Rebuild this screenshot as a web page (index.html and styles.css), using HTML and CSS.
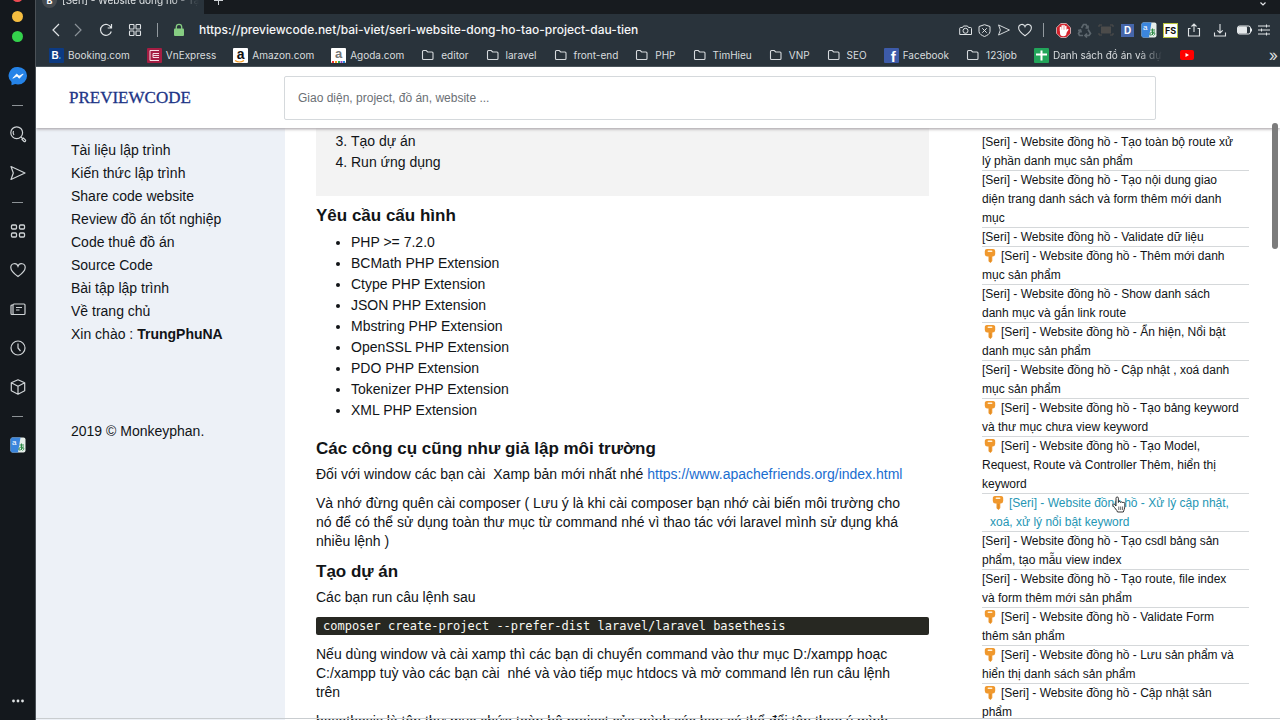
FILE: index.html
```html
<!DOCTYPE html>
<html lang="vi">
<head>
<meta charset="utf-8">
<title>[Seri] - Website đồng hồ - Tạo project đầu tiên</title>
<link rel="stylesheet" href="styles.css">
</head>
<body>
<svg class="defs" aria-hidden="true">
  <symbol id="folder" viewBox="0 0 14 12"><path d="M1.500 9.500v-7a1 1 0 0 1 1-1h2.700l1.500 1.500h4.300a1 1 0 0 1 1 1v5.500a1 1 0 0 1-1 1h-8.500a1 1 0 0 1-1-1z" fill="none" stroke="#d5d9dc" stroke-width="1.100"/></symbol>
  <symbol id="key" viewBox="0 0 12 14"><path d="M3 0h6a2.300 2.300 0 0 1 2.200 2.500v2.500A2.700 2.700 0 0 1 8.300 7.500V12L6.500 14 4.500 12.300V7.500H3.700A2.700 2.700 0 0 1 .8 5V2.500A2.300 2.300 0 0 1 3 0z" fill="#f0982d"/><path d="M4.300 2.300h3.400" stroke="#fff3dc" stroke-width="1.500" stroke-linecap="round"/><path d="M6.200 8v5" stroke="#d08222" stroke-width=".7"/></symbol>
  <symbol id="heart" viewBox="0 0 18 18"><path d="M9 15.500C4 12 1.800 9.500 1.800 6.500a3.700 3.700 0 0 1 7.200-1.300 3.700 3.700 0 0 1 7.200 1.300c0 3-2.200 5.500-7.200 9z" fill="none" stroke="currentColor" stroke-width="1.200"/></symbol>
  <symbol id="send" viewBox="0 0 18 18"><path d="M2 2.500l14 6.500-14 6.500 2.300-6.500z" fill="none" stroke="currentColor" stroke-width="1.200" stroke-linejoin="round"/></symbol>
  <symbol id="grid" viewBox="0 0 18 18"><g fill="none" stroke="currentColor" stroke-width="1.300"><rect x="2.500" y="3" width="5" height="4" rx="1"/><rect x="10.500" y="3" width="5" height="4" rx="1"/><rect x="2.500" y="11" width="5" height="4" rx="1"/><rect x="10.500" y="11" width="5" height="4" rx="1"/></g></symbol>
  <symbol id="tiles" viewBox="0 0 14 14"><g fill="none" stroke="currentColor" stroke-width="1.100"><rect x="1.500" y="1.500" width="4.500" height="4.500" rx=".7"/><rect x="8" y="1.500" width="4.500" height="4.500" rx=".7"/><rect x="1.500" y="8" width="4.500" height="4.500" rx=".7"/><rect x="8" y="8" width="4.500" height="4.500" rx=".7"/></g></symbol>
  <symbol id="translate" viewBox="0 0 16 16"><rect x=".5" y=".5" width="15" height="15" rx="2" fill="#e6eeea"/><path d="M2.500.5h8L8 15.500H2.500a2 2 0 0 1-2-2v-11a2 2 0 0 1 2-2z" fill="#3b86dd"/><text x="2" y="8" font-family="Liberation Sans" font-size="8" fill="#fff">a</text><path d="M9.500 8h4.500M11.500 6.500v6.500M13.500 9.500c-1 2-2.500 3.500-4 3.500s-.5-3 2-3 3 2.500 1 3.500" fill="none" stroke="#2d8a45" stroke-width="1"/></symbol>
</svg>

<nav class="rail" aria-label="Thanh bên trình duyệt">
  <div class="lights"><span class="light red"></span><span class="light yellow"></span><span class="light green"></span></div>
  <button class="rail-btn" aria-label="Messenger"><svg width="20" height="20" viewBox="0 0 20 20"><path d="M10 1a9 8.700 0 0 1 0 17.500c-1 0-2-.1-2.900-.4L3.500 19.200v-3.100A8.700 8.700 0 0 1 10 1z" fill="#2583e8"/><path d="M4.800 12.200L8.700 8l2.300 2.200L15.200 8l-3.900 4.300L9 10.100z" fill="#fff" stroke="#fff" stroke-width=".8"/></svg></button>
  <hr class="dash">
  <button class="rail-btn" aria-label="Search"><svg width="18" height="18" viewBox="0 0 18 18" fill="none" stroke="currentColor" stroke-width="1.200"><circle cx="7.700" cy="7.700" r="5.900"/><path d="M12 12l1.500 1.500M5 10a3.600 3.600 0 0 1-.5-4M13 14.500l1.500-1.500 2 2a1.100 1.100 0 0 1-1.500 1.500z"/></svg></button>
  <button class="rail-btn" aria-label="Send"><svg width="18" height="18"><use href="#send"/></svg></button>
  <hr class="dash">
  <button class="rail-btn" aria-label="Speed dial"><svg width="18" height="18"><use href="#grid"/></svg></button>
  <button class="rail-btn" aria-label="Favorites"><svg width="18" height="18"><use href="#heart"/></svg></button>
  <button class="rail-btn" aria-label="News"><svg width="18" height="18" viewBox="0 0 18 18" fill="none" stroke="currentColor" stroke-width="1.200"><rect x="4" y="4" width="12" height="10.500" rx="1"/><path d="M4 5H3a1 1 0 0 0-1 1v7.500a1 1 0 0 0 1 1h2M7 7.500h6M7 10h3.500"/></svg></button>
  <button class="rail-btn" aria-label="History"><svg width="18" height="18" viewBox="0 0 18 18" fill="none" stroke="currentColor" stroke-width="1.200"><circle cx="9" cy="9" r="7"/><path d="M9 4.500V9l2.500 3"/></svg></button>
  <button class="rail-btn" aria-label="Extensions"><svg width="18" height="18" viewBox="0 0 18 18" fill="none" stroke="currentColor" stroke-width="1.200" stroke-linejoin="round"><path d="M9 1.800l6.700 3v8L9 16.200l-6.700-3.400v-8zM2.300 4.800L9 8.200l6.700-3.400M9 8.200v8"/></svg></button>
  <hr class="dash">
  <button class="rail-btn" aria-label="Translate"><svg width="16" height="16"><use href="#translate"/></svg></button>
  <button class="rail-btn more" aria-label="More"><svg width="14" height="6" viewBox="0 0 14 6" fill="#dfe2e4"><circle cx="2.500" cy="3" r="1.400"/><circle cx="7" cy="3" r="1.400"/><circle cx="11.500" cy="3" r="1.400"/></svg></button>
</nav>

<div class="window">
  <div class="tabs">
    <div class="tab"><span class="tab-icon">B</span><span class="tab-title">[Seri] - Website đồng hồ - Tạo</span></div>
    <button class="new-tab" aria-label="New tab"><svg width="9" height="9" viewBox="0 0 9 9"><path d="M4.500 0v9M0 4.500h9" stroke="#cfd3d6"/></svg></button>
    <button class="tab-menu" aria-label="Tabs"><svg width="8" height="6" viewBox="0 0 8 6"><path d="M1.500 1.500L4 4l2.500-2.500" fill="none" stroke="#e2e5e7" stroke-width="1.200"/></svg></button>
  </div>

  <div class="toolbar">
    <button aria-label="Back"><svg width="10" height="14" viewBox="0 0 10 14"><path d="M8 1L2 7l6 6" fill="none" stroke="#dfe3e5" stroke-width="1.200"/></svg></button>
    <button class="forward" aria-label="Forward"><svg width="10" height="14" viewBox="0 0 10 14"><path d="M2 1l6 6-6 6" fill="none" stroke="#8b9399" stroke-width="1.200"/></svg></button>
    <button class="reload" aria-label="Reload"><svg width="14" height="14" viewBox="0 0 14 14" fill="none" stroke="#dfe3e5" stroke-width="1.200"><path d="M12.300 8.500A5.500 5.500 0 1 1 12 4.500M12.500 1v4H8.700"/></svg></button>
    <button aria-label="Speed dial"><svg width="14" height="14"><use href="#tiles"/></svg></button>
    <span class="divider"></span>
    <svg class="lock" width="12" height="14" viewBox="0 0 12 14"><rect x="1" y="5.500" width="10" height="7.500" rx="1" fill="#86cd82"/><path d="M3.300 6V4a2.700 2.700 0 0 1 5.400 0v2" fill="none" stroke="#86cd82" stroke-width="1.300"/></svg>
    <input class="url" aria-label="Address" value="https://previewcode.net/bai-viet/seri-website-dong-ho-tao-project-dau-tien">
    <div class="tools">
      <button aria-label="Snapshot"><svg width="13" height="13" viewBox="0 0 13 13" fill="none" stroke="currentColor"><path d="M1.500 3.500h2l1-1.500h4l1 1.500h2a1 1 0 0 1 1 1v6H.7v-6a1 1 0 0 1 .8-1z"/><circle cx="6.500" cy="6.800" r="2.500"/></svg></button>
      <button aria-label="Ad blocker"><svg width="13" height="13" viewBox="0 0 13 13" fill="none" stroke="currentColor"><path d="M6.500.7L12 2.500v5c0 2.500-3 4-5.500 5-2.500-1-5.500-2.500-5.500-5v-5zM4.300 4.300l4.400 4.400M8.700 4.300L4.300 8.700"/></svg></button>
      <button aria-label="My flow"><svg width="14" height="14"><use href="#send"/></svg></button>
      <button class="like" aria-label="Bookmark"><svg width="16" height="16"><use href="#heart"/></svg></button>
      <span class="divider"></span>
      <button aria-label="AdBlock"><svg width="15" height="15" viewBox="0 0 15 15"><path d="M4.700.5h5.600l4.200 4.200v5.600l-4.200 4.200H4.700L.5 10.300V4.700z" fill="#d3222b" stroke="#efd9da" stroke-width=".7"/><path d="M4.500 8V4.500M6.200 7V2.700M8 7V2.500M9.800 7.500V3.500M5 7.500h5.500M10 9l1.800-2.500" stroke="#fff" stroke-width="1.500" stroke-linecap="round"/><path d="M4 7h6.500v3a3 3 0 0 1-6.500 0z" fill="#fff"/></svg></button>
      <button aria-label="Recycle"><svg width="15" height="15" viewBox="0 0 15 15" fill="none" stroke="#5c666d" stroke-width="1.700"><path d="M4.500 5l2-3.500h2.500l1.500 3M11 6.500l2.500 4-1.500 2H8.500M6 12.500H2.500l-1-2L3.500 7M8.500 5h2.500V2.500M10 10.500l-2 2 2 2M1 7.500L3.500 7l.8 2.500"/></svg></button>
      <button aria-label="Capture"><svg width="16" height="12" viewBox="0 0 16 12"><rect x="3" y="2.500" width="10" height="7" fill="#4b4b4a"/><path d="M1 3V1h3M12 1h3v2M15 9v2h-3M4 11H1V9" fill="none" stroke="#504f4d"/></svg></button>
      <button class="ext dict" aria-label="Dictionary">D</button>
      <button aria-label="Translate"><svg width="16" height="16"><use href="#translate"/></svg></button>
      <button class="ext fs" aria-label="FS">FS</button>
      <button class="share" aria-label="Share"><svg width="14" height="14" viewBox="0 0 14 14" fill="none" stroke="currentColor" stroke-width="1.100"><path d="M3.500 5.500H1.500v7.500h11V5.500h-2M7 9V1M4.500 3.500L7 1l2.500 2.500"/></svg></button>
      <button class="save" aria-label="Downloads"><svg width="14" height="14" viewBox="0 0 14 14" fill="none" stroke="currentColor" stroke-width="1.100"><path d="M1.500 9.500V13h11V9.500M7 1v9M4.300 7.300L7 10l2.700-2.700"/></svg></button>
      <button aria-label="Battery"><svg width="15" height="10" viewBox="0 0 15 10"><rect x=".5" y="1" width="13" height="8" rx="2" fill="none" stroke="#e5e9eb"/><rect x="1" y="1.500" width="9" height="7" rx="1" fill="#e5e9eb"/><path d="M14.500 3.500v3" stroke="#e5e9eb"/></svg></button>
      <button aria-label="Easy setup"><svg width="12" height="12" viewBox="0 0 12 12" fill="none" stroke="currentColor"><path d="M0 2h12M0 6h12M0 10h12M8.500.5v3M3.500 4.500v3M8.500 8.500v3"/></svg></button>
    </div>
  </div>

  <nav class="bookmarks" aria-label="Dấu trang">
    <a href="#"><span class="fav booking">B<i>.</i></span>Booking.com</a>
    <a href="#"><svg width="15" height="15" viewBox="0 0 15 15"><rect width="15" height="15" rx="1" fill="#a51d43"/><path d="M12 2.500H3v10h9M12 5.500H6v4h6M12 7.500H6" fill="none" stroke="#f6dce4"/></svg>VnExpress</a>
    <a href="#"><span class="fav amazon">a<svg width="11" height="3" viewBox="0 0 11 3"><path d="M1 .5c3 2 6 2 9 0" fill="none" stroke="#f29a22" stroke-width="1.200"/></svg></span>Amazon.com</a>
    <a href="#"><span class="fav agoda">a<svg width="13" height="2" viewBox="0 0 13 2"><path d="M0 1h2" stroke="#e33" stroke-width="2"/><path d="M3 1h2" stroke="#f2a21b" stroke-width="2"/><path d="M6 1h2" stroke="#3a5" stroke-width="2"/><path d="M8.500 1h2" stroke="#84c" stroke-width="2"/><path d="M11 1h2" stroke="#28d" stroke-width="2"/></svg></span>Agoda.com</a>
    <a href="#" class="dir"><svg width="14" height="12"><use href="#folder"/></svg>editor</a>
    <a href="#" class="dir"><svg width="14" height="12"><use href="#folder"/></svg>laravel</a>
    <a href="#" class="dir"><svg width="14" height="12"><use href="#folder"/></svg>front-end</a>
    <a href="#" class="dir"><svg width="14" height="12"><use href="#folder"/></svg>PHP</a>
    <a href="#" class="dir"><svg width="14" height="12"><use href="#folder"/></svg>TimHieu</a>
    <a href="#" class="dir"><svg width="14" height="12"><use href="#folder"/></svg>VNP</a>
    <a href="#" class="dir"><svg width="14" height="12"><use href="#folder"/></svg>SEO</a>
    <a href="#"><span class="fav facebook">f</span>Facebook</a>
    <a href="#" class="dir"><svg width="14" height="12"><use href="#folder"/></svg>123job</a>
    <a href="#"><svg width="15" height="15" viewBox="0 0 15 15"><rect width="15" height="15" rx="1" fill="#22a55a"/><path d="M7.500 2.500v10M2 6.500h11" stroke="#fff" stroke-width="2"/></svg><span class="faded">Danh sách đồ án và dự</span></a>
    <a href="#" aria-label="YouTube"><svg width="14" height="10" viewBox="0 0 14 10"><rect width="14" height="10" rx="2" fill="#f00"/><path d="M5.500 3v4L9 5z" fill="#fff"/></svg></a>
    <button class="overflow" aria-label="More bookmarks">»</button>
  </nav>

  <div class="page">
    <header class="site-header">
      <a class="logo" href="#">PREVIEWCODE</a>
      <input class="search" type="search" aria-label="Tìm kiếm" placeholder="Giao diện, project, đồ án, website ...">
    </header>
    <div class="columns">
      <aside class="menu">
        <a href="#">Tài liệu lập trình</a>
        <a href="#">Kiến thức lập trình</a>
        <a href="#">Share code website</a>
        <a href="#">Review đồ án tốt nghiệp</a>
        <a href="#">Code thuê đồ án</a>
        <a href="#">Source Code</a>
        <a href="#">Bài tập lập trình</a>
        <a href="#">Về trang chủ</a>
        <a href="#">Xin chào : <b>TrungPhuNA</b></a>
        <p class="copyright">2019 © Monkeyphan.</p>
      </aside>
      <main class="article">
        <div class="toc"><ol start="3"><li>Tạo dự án</li><li>Run ứng dụng</li></ol></div>
        <h3>Yêu cầu cấu hình</h3>
        <ul>
          <li>PHP &gt;= 7.2.0</li>
          <li>BCMath PHP Extension</li>
          <li>Ctype PHP Extension</li>
          <li>JSON PHP Extension</li>
          <li>Mbstring PHP Extension</li>
          <li>OpenSSL PHP Extension</li>
          <li>PDO PHP Extension</li>
          <li>Tokenizer PHP Extension</li>
          <li>XML PHP Extension</li>
        </ul>
        <h3>Các công cụ cũng như giả lập môi trường</h3>
        <p>Đối với window các bạn cài &nbsp;Xamp bản mới nhất nhé <a href="#">https://www.apachefriends.org/index.html</a></p>
        <p>Và nhớ đừng quên cài composer ( Lưu ý là khi cài composer bạn nhớ cài biến môi trường cho<br>nó để có thể sử dụng toàn thư mục từ command nhé vì thao tác với laravel mình sử dụng khá<br>nhiều lệnh )</p>
        <h3>Tạo dự án</h3>
        <p>Các bạn run câu lệnh sau</p>
        <pre><code>composer create-project --prefer-dist laravel/laravel basethesis</code></pre>
        <p>Nếu dùng window và cài xamp thì các bạn di chuyển command vào thư mục D:/xampp hoạc<br>C:/xampp tuỳ vào các bạn cài &nbsp;nhé và vào tiếp mục htdocs và mở command lên run câu lệnh<br>trên</p>
        <p>basethesis là tên thư mục chứa toàn bộ project của mình các bạn có thể đổi tên theo ý mình</p>
      </main>
      <aside class="series">
        <a href="#">[Seri] - Website đồng hồ - Tạo toàn bộ route xử<br>lý phần danh mục sản phẩm</a>
        <a href="#">[Seri] - Website đồng hồ - Tạo nội dung giao<br>diện trang danh sách và form thêm mới danh<br>mục</a>
        <a href="#">[Seri] - Website đồng hồ - Validate dữ liệu</a>
        <a href="#"><svg class="key"><use href="#key"/></svg>[Seri] - Website đồng hồ - Thêm mới danh<br>mục sản phẩm</a>
        <a href="#">[Seri] - Website đồng hồ - Show danh sách<br>danh mục và gắn link route</a>
        <a href="#"><svg class="key"><use href="#key"/></svg>[Seri] - Website đồng hồ - Ẩn hiện, Nổi bật<br>danh mục sản phẩm</a>
        <a href="#">[Seri] - Website đồng hồ - Cập nhật , xoá danh<br>mục sản phẩm</a>
        <a href="#"><svg class="key"><use href="#key"/></svg>[Seri] - Website đồng hồ - Tạo bảng keyword<br>và thư mục chưa view keyword</a>
        <a href="#"><svg class="key"><use href="#key"/></svg>[Seri] - Website đồng hồ - Tạo Model,<br>Request, Route và Controller Thêm, hiển thị<br>keyword</a>
        <a href="#" class="active"><svg class="key"><use href="#key"/></svg>[Seri] - Website đồng hồ - Xử lý cập nhật,<br>xoá, xử lý nổi bật keyword
          <svg class="pointer" viewBox="0 0 14 17"><path d="M4 9V2.200a1.200 1.200 0 0 1 2.400 0V6.500a1.100 1.100 0 0 1 2.200 0 1.100 1.100 0 0 1 2.100.500 1.100 1.100 0 0 1 2.100.500V11c0 2-1 3-1.500 5H5.500C5 14 2.500 12 1 9.500.5 8 2 7.500 3 8.700L4 10z" fill="#fff" stroke="#222" stroke-width=".9"/><path d="M6.800 10.500v3.500M8.700 10.500v3.500M10.600 10.500v3.500" stroke="#222" stroke-width=".7"/></svg></a>
        <a href="#">[Seri] - Website đồng hồ - Tạo csdl bảng sản<br>phẩm, tạo mẫu view index</a>
        <a href="#">[Seri] - Website đồng hồ - Tạo route, file index<br>và form thêm mới sản phẩm</a>
        <a href="#"><svg class="key"><use href="#key"/></svg>[Seri] - Website đồng hồ - Validate Form<br>thêm sản phẩm</a>
        <a href="#"><svg class="key"><use href="#key"/></svg>[Seri] - Website đồng hồ - Lưu sản phẩm và<br>hiển thị danh sách sản phẩm</a>
        <a href="#"><svg class="key"><use href="#key"/></svg>[Seri] - Website đồng hồ - Cập nhật sản<br>phẩm</a>
      </aside>
    </div>
    <span class="scroll-thumb"></span>
  </div>
</div>
</body>
</html>
```
FILE: styles.css
```css
* { box-sizing: border-box; }
body {
  margin: 0;
  height: 100vh;
  overflow: hidden;
  display: flex;
  background: #fff;
  color: #111417;
  font: 14px/19px "Liberation Sans", Arial, sans-serif;
}
button {
  padding: 0;
  border: 0;
  background: none;
  color: inherit;
  font: inherit;
  display: flex;
  align-items: center;
  justify-content: center;
}
a { color: inherit; text-decoration: none; }
h3, p, ul, ol, pre { margin: 0; }
svg { flex: none; display: block; }
.defs { display: none; }

/* Browser side rail */
.rail {
  flex: none;
  width: 36px;
  display: flex;
  flex-direction: column;
  align-items: center;
  gap: 19px;
  background: #14181d;
  border-right: 1px solid #4b5157;
  color: #cfd3d6;
}
.lights { display: flex; flex-direction: column; gap: 9px; margin: -9px 0 5px; }
.light { width: 11px; height: 11px; border-radius: 50%; }
.red { background: #ee4b53; }
.yellow { background: #f5bd40; }
.green { background: #34d14c; }
.rail-btn { width: 20px; height: 20px; flex: none; }
.dash { width: 11px; height: 1px; margin: 0 0 -1px; border: 0; background: #8d9296; }
.more { margin-top: auto; margin-bottom: 9px; }

.window { flex: 1; min-width: 0; display: flex; flex-direction: column; }

/* Tab strip */
.tabs { display: flex; height: 14px; flex: none; background: #171b1f; overflow: hidden; }
.tab {
  width: 168px;
  height: 28px;
  margin-top: -14px;
  padding: 0 5px 0 6px;
  display: flex;
  align-items: center;
  gap: 5px;
  background: #29333b;
  color: #dfe3e5;
  font: 10px/28px Inter, sans-serif;
}
.tab-icon {
  width: 15px;
  height: 15px;
  flex: none;
  border-radius: 50%;
  background: #454b50;
  color: #fff;
  font-weight: 700;
  font-size: 9px;
  line-height: 15px;
  text-align: center;
}
.tab-title {
  flex: 1;
  overflow: hidden;
  white-space: nowrap;
  -webkit-mask-image: linear-gradient(90deg, #000 80%, transparent);
  mask-image: linear-gradient(90deg, #000 80%, transparent);
}
.new-tab { margin: -14px 0 0 10px; height: 28px; }
.tab-menu { margin: 0 13px 0 auto; height: 8px; }

/* Toolbar */
.toolbar {
  display: flex;
  align-items: center;
  height: 32px;
  flex: none;
  padding: 0 10px 0 15px;
  gap: 12px;
  background: #29333b;
  color: #dfe3e5;
}
.reload { margin-left: 4px; }
.reload + button { margin-left: 3px; }
.divider { width: 1px; height: 14px; background: #929a9f; flex: none; margin: 0 3px; }
.url {
  flex: 1;
  min-width: 0;
  border: 0;
  padding: 0;
  margin-left: 2px;
  background: none;
  color: #f5f6f7;
  font: 500 12px/18px Inter, sans-serif;
}
.tools { display: flex; align-items: center; gap: 6px; }
.like { margin-right: 4px; }
.tools .divider { margin: 0 6px 0 0; }
.ext { width: 13px; height: 13px; font: 700 10px/13px Inter, sans-serif; margin: 0 1px; }
.dict { background: #4566aa; color: #fff; }
.fs { background: #fff; color: #111; font-size: 9px; outline: 1px solid #b9c33b; }
.share { margin: 0 4px 0 3px; }
.save { margin: 0 4px 0 2px; }

/* Bookmark bar */
.bookmarks {
  display: flex;
  align-items: center;
  height: 21px;
  flex: none;
  padding: 0 2px 2px 13px;
  gap: 17px;
  background: #29333b;
  border-bottom: 1px solid #4a545b;
  color: #d9dddf;
  font: 10px/16px Inter, sans-serif;
  white-space: nowrap;
}
.bookmarks a { display: flex; align-items: center; gap: 4px; }
.bookmarks .dir { gap: 6px; }
.fav {
  position: relative;
  width: 15px;
  height: 15px;
  flex: none;
  border-radius: 1px;
  text-align: center;
  font: 700 10px/15px "Liberation Sans", sans-serif;
}
.fav svg { position: absolute; left: 1px; bottom: 0; }
.booking { background: #0c3a82; color: #fff; }
.booking i { color: #2fa4e8; }
.amazon { background: #fff; color: #111; font-size: 14px; line-height: 12px; }
.agoda { background: #fff; color: #777; font-size: 13px; line-height: 11px; }
.facebook { background: #3d5ba9; color: #fff; font-size: 15px; line-height: 17px; padding-left: 4px; }
.faded {
  width: 110px;
  overflow: hidden;
  -webkit-mask-image: linear-gradient(90deg, #000 78%, transparent);
  mask-image: linear-gradient(90deg, #000 78%, transparent);
}
.overflow { margin-left: auto; font-size: 16px; }

/* Web page */
.page { position: relative; flex: 1; min-height: 0; display: flex; flex-direction: column; overflow: hidden; }
.page::after { content: ""; position: absolute; left: 0; right: 0; bottom: 1px; height: 1px; background: #c9cdd0; }
.site-header {
  position: relative;
  z-index: 1;
  flex: none;
  height: 61px;
  display: flex;
  align-items: center;
  padding: 0 124px 0 33px;
  background: #fff;
  box-shadow: 0 1px 3px #9f999d;
}
.logo { width: 215px; color: #1d3587; font: 17px/24px "Liberation Serif", serif; -webkit-text-stroke: 0.3px #1d3587; }
.search {
  flex: 1;
  height: 44px;
  padding: 0 13px;
  border: 1px solid #d5d9dc;
  border-radius: 2px;
  background: #fff;
  font: 12px/18px "Liberation Sans", sans-serif;
}
.search::placeholder { color: #6b7075; opacity: 1; }
.columns { flex: 1; min-height: 0; display: flex; }
.menu {
  flex: none;
  width: 249px;
  padding: 11px 0 0 35px;
  background: #edf1f7;
  line-height: 23px;
}
.menu a { display: block; }
.copyright { margin-top: 74px; }

.article { flex: 1; min-width: 0; padding: 0 0 0 31px; }
.toc { background: #f3f3f3; padding: 3px 0 23px; }
.article ul, .article ol { padding-left: 35px; line-height: 21px; }
.article h3 { margin: 17px 0 5px; font-size: 17px; line-height: 22px; }
.article .toc + h3 { margin-top: 9px; }
.article p { margin-bottom: 10px; white-space: nowrap; }
.article p a { color: #1a6dd0; }
.article p + h3 { margin-top: 10px; }
.article pre {
  margin-bottom: 10px;
  padding: 0 7px;
  border-radius: 2px;
  background: #272822;
  color: #f8f8f2;
  font: 12px/18px "DejaVu Sans Mono", monospace;
}
.article code { font: inherit; }

.series {
  flex: none;
  width: 351px;
  padding: 5px 31px 0 53px;
  font-size: 12px;
  white-space: nowrap;
}
.series a { position: relative; display: block; box-shadow: inset 0 -1px #d5d8da; }
.series .active { color: #2596b4; padding-left: 8px; }
.key { display: inline-block; width: 12px; height: 14px; margin: 0 5px 0 2px; vertical-align: -3px; }
.pointer { position: absolute; left: 130px; top: 2px; width: 14px; height: 17px; }
.scroll-thumb {
  position: absolute;
  z-index: 2;
  right: 2px;
  top: 56px;
  width: 6px;
  height: 126px;
  border-radius: 3px;
  background: #7c7c7c;
}
```
